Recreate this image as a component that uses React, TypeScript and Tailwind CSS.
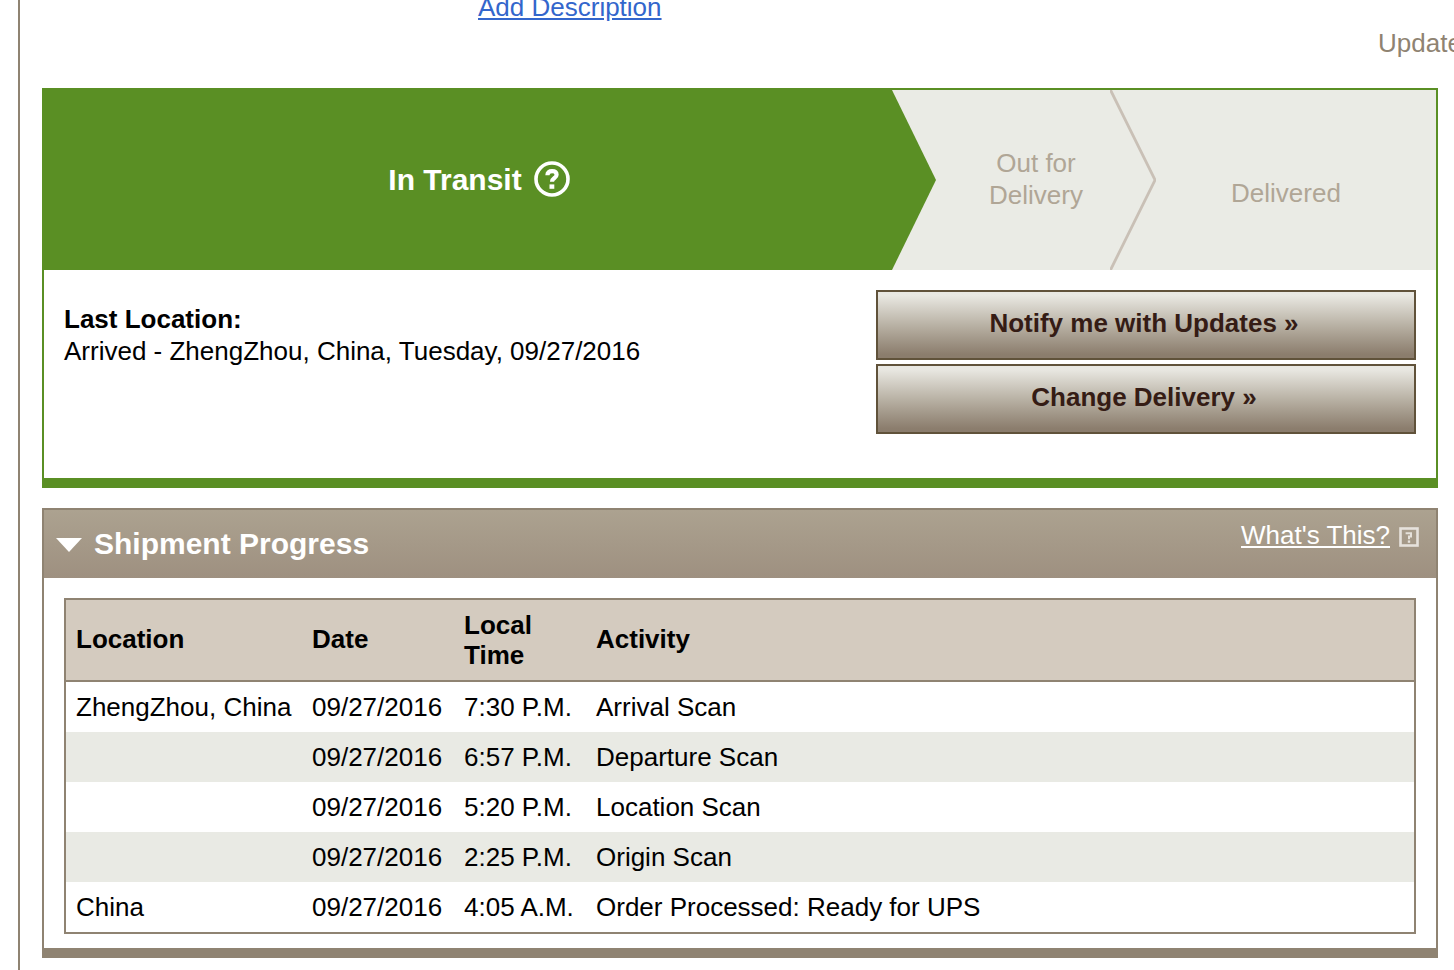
import type { ReactNode } from "react";

type Scan = { location: string; date: string; time: string; activity: string };

const scans: Scan[] = [
  { location: "ZhengZhou, China", date: "09/27/2016", time: "7:30 P.M.", activity: "Arrival Scan" },
  { location: "", date: "09/27/2016", time: "6:57 P.M.", activity: "Departure Scan" },
  { location: "", date: "09/27/2016", time: "5:20 P.M.", activity: "Location Scan" },
  { location: "", date: "09/27/2016", time: "2:25 P.M.", activity: "Origin Scan" },
  { location: "China", date: "09/27/2016", time: "4:05 A.M.", activity: "Order Processed: Ready for UPS" },
];

function RoundHelpIcon() {
  return (
    <svg width="36" height="36" viewBox="0 0 36 36" fill="none" stroke="#fff" className="overflow-visible" aria-hidden="true">
      <circle cx="18" cy="17" r="16" strokeWidth="3.6" />
      <path d="M13.4 13.2c0-2.8 1.8-4 4.6-4 2.7 0 4.6 1.2 4.6 3.5 0 3.5-4.6 3.1-4.6 7.1" strokeWidth="4.2" />
      <path d="M17.9 22.4v4.4" strokeWidth="4.8" />
    </svg>
  );
}

function SquareHelpIcon() {
  return (
    <svg width="20" height="20" viewBox="0 0 20 20" fill="none" stroke="#e6e2dc" aria-hidden="true">
      <rect x="1.5" y="1.5" width="17" height="17" strokeWidth="2.6" />
      <path d="M6.6 6.2H12v3.4h-2v2.6" strokeWidth="2" />
      <path d="M10 13.4v2.4" strokeWidth="2.4" />
    </svg>
  );
}

function ActionButton({ children }: { children: ReactNode }) {
  return (
    <button
      type="button"
      className="h-[70px] w-full border-2 border-[#60523a] bg-linear-to-b from-[#e9e8e2] from-5% via-[#b9b2a5] via-50% to-[#8b7d6d] to-95% pr-1 pb-1 font-bold text-[#351c15]"
    >
      {children}
    </button>
  );
}

function StatusBar() {
  return (
    <div className="flex h-[180px] bg-[#eaebe5] text-[#b0a696]">
      <div className="flex flex-1 items-center justify-center gap-3 bg-[#5a8f24] pl-[22px] text-[30px] font-bold text-white">
        In Transit
        <button type="button" aria-label="Help">
          <RoundHelpIcon />
        </button>
      </div>
      <svg width="44" height="180" viewBox="0 0 44 180" aria-hidden="true">
        <path d="M0 0 44 90 0 180Z" fill="#5a8f24" />
      </svg>
      <div className="flex w-[174px] items-center justify-center pb-0.5 pl-[26px] text-center leading-8">
        <span className="w-[100px]">Out for Delivery</span>
      </div>
      <svg width="46" height="180" viewBox="0 0 46 180" fill="none" aria-hidden="true">
        <path d="M0.5 0 45 90 0.5 180" stroke="#c9c0b6" strokeWidth="2.8" />
      </svg>
      <div className="flex w-[280px] items-center justify-center pt-[26px] pr-5 leading-8">Delivered</div>
    </div>
  );
}

function ScanTable() {
  return (
    <div className="border-2 border-[#8f8372]">
      <table className="w-full table-fixed border-separate border-spacing-0 text-left">
        <thead className="bg-[#d4cbbf]">
          <tr className="h-[82px]">
            <th scope="col" className="w-[236px] border-b-2 border-[#8f8372] px-2.5 pb-0.5">Location</th>
            <th scope="col" className="w-[152px] border-b-2 border-[#8f8372] px-2.5 pb-0.5">Date</th>
            <th scope="col" className="w-[132px] border-b-2 border-[#8f8372] px-2.5">Local Time</th>
            <th scope="col" className="border-b-2 border-[#8f8372] px-2.5 pb-0.5">Activity</th>
          </tr>
        </thead>
        <tbody>
          {scans.map((scan) => (
            <tr key={scan.time} className="h-[50px] whitespace-nowrap even:bg-[#e9eae4]">
              <td className="pl-2.5">{scan.location}</td>
              <td className="pl-2.5">{scan.date}</td>
              <td className="pl-2.5">{scan.time}</td>
              <td className="pl-2.5">{scan.activity}</td>
            </tr>
          ))}
        </tbody>
      </table>
    </div>
  );
}

export default function App() {
  return (
    <div className="h-screen overflow-hidden bg-white pl-[18px] font-['Liberation_Sans',Arial,sans-serif] text-[26px] leading-[30px] text-black">
      <div className="flex min-h-screen flex-col border-l-2 border-[#8f8372] pl-[22px]">
        <div className="-mt-2 pl-[436px]">
          <a href="#description" className="text-[#3366cc] underline">Add Description</a>
        </div>
        <div className="mt-1.5 flex justify-end overflow-hidden text-[#8f8372]">
          <span className="w-[76px] whitespace-nowrap">Update</span>
        </div>

        <main className="mt-[30px] mr-4 flex flex-col gap-5">
          <section className="border-2 border-b-[10px] border-[#5a8f24]">
            <StatusBar />
            <div className="flex justify-between px-5 pt-5 pb-11">
              <div className="pt-[13px] leading-8">
                <h2 className="font-bold">Last Location:</h2>
                <p>Arrived - ZhengZhou, China, Tuesday, 09/27/2016</p>
              </div>
              <div className="flex w-[540px] flex-col gap-1">
                <ActionButton>Notify me with Updates »</ActionButton>
                <ActionButton>Change Delivery »</ActionButton>
              </div>
            </div>
          </section>

          <section className="border-2 border-b-[10px] border-[#8f8372]">
            <header className="flex h-[68px] justify-between bg-linear-to-b from-[#aca290] to-[#9e9080] pr-[17px] pl-3 text-white">
              <button type="button" className="flex items-center gap-3 text-[30px] font-bold" aria-expanded="true">
                <svg width="26" height="16" viewBox="0 0 26 16" aria-hidden="true">
                  <path d="M0 2H26L13 16Z" fill="#fff" />
                </svg>
                Shipment Progress
              </button>
              <a href="#help" className="flex h-[54px] items-center gap-[9px]">
                <span className="pb-1 underline">What's This?</span>
                <SquareHelpIcon />
              </a>
            </header>
            <div className="px-5 pt-5 pb-3.5">
              <ScanTable />
            </div>
          </section>
        </main>
      </div>
    </div>
  );
}
